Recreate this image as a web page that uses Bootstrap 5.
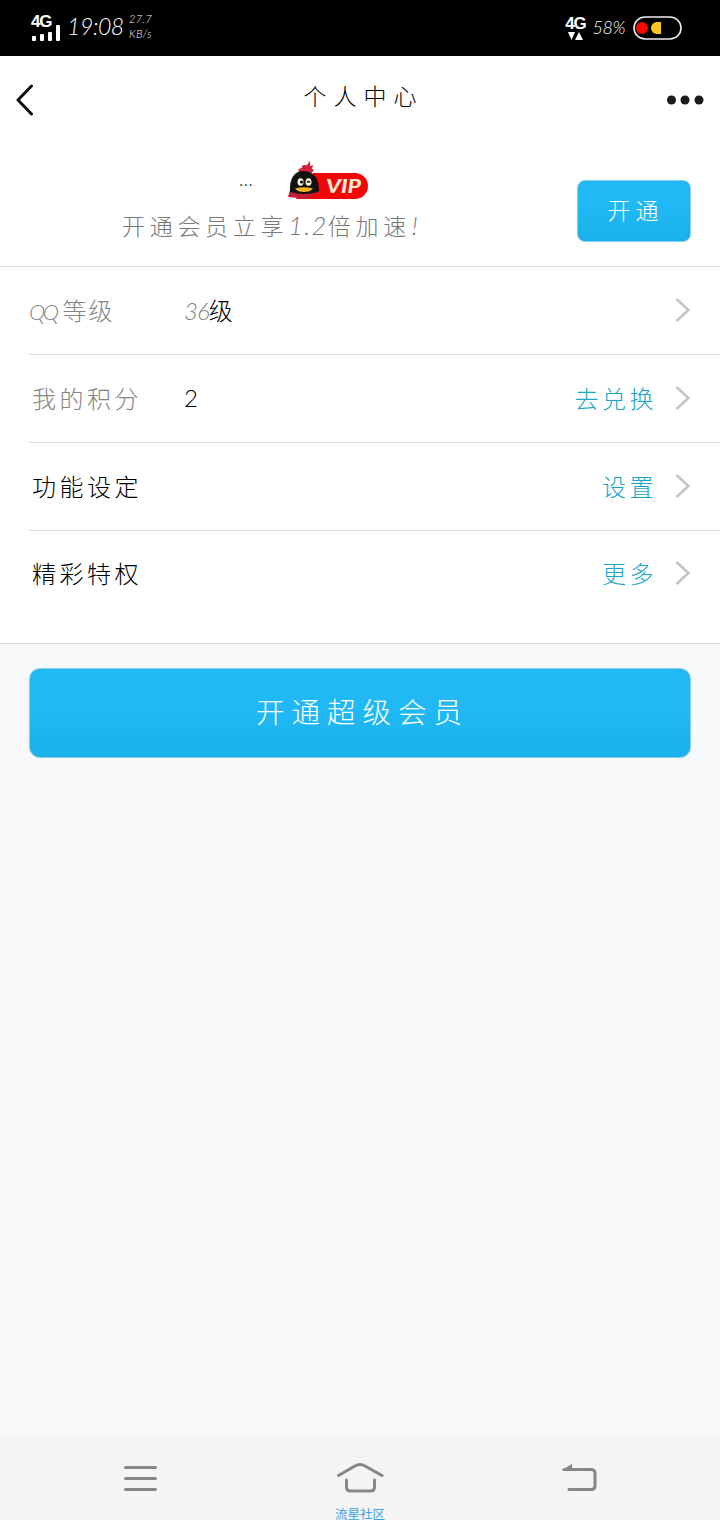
<!DOCTYPE html>
<html lang="zh-CN">
<head>
<meta charset="utf-8">
<meta name="viewport" content="width=device-width, initial-scale=1">
<title>个人中心</title>
<link href="https://cdn.jsdelivr.net/npm/bootstrap@5.3.0/dist/css/bootstrap.min.css" rel="stylesheet">
<style>
body{font-family:"Noto Sans CJK SC",sans-serif;font-weight:300;line-height:1;background:#f7f9fb;color:#000;height:1520px;overflow:hidden}
svg{display:block;flex:none}
.lat{font-family:Lato,"Liberation Sans",sans-serif;font-weight:300;font-style:italic}
.status{height:56px;background:#000;color:#fff;padding:0 38px 0 31px}
.net{font-family:"Liberation Sans",sans-serif;font-weight:700;font-size:17px;letter-spacing:-1.2px;line-height:15px}
.clock{font-size:23px;letter-spacing:-.4px;margin:0 0 3px 7px;width:55px}
.speed{font-size:11px;line-height:15px;letter-spacing:.4px;margin:0 0 4px 7px}
.battery-text{font-size:18px;letter-spacing:-.5px;margin:0 8px 3px 7px}
.topbar{height:88px;padding:0 16px}
.page-title{font-size:23px;letter-spacing:7px;padding-left:27px}
.profile{height:123px;border-bottom:1px solid #dadddf;padding:0 29px 0 122px}
.promo{color:#777;font-size:23px;letter-spacing:4.7px;margin-top:13px;white-space:nowrap}
.promo .lat{letter-spacing:1.6px;font-size:25px;line-height:20px}
.promo .bang{margin-left:1px}
.nick{font-size:17px;width:166px;padding-left:117px;height:22px;line-height:18px;letter-spacing:.5px}
.blue{background:linear-gradient(#21b9f5 45%,#19b1ea);border:1px solid #8ccce6;color:#fff;font-weight:300;line-height:1}
.blue:hover{color:#fff}
.open-btn{width:114px;height:62px;border-radius:8px;font-size:23px;letter-spacing:5px;padding:0 0 4px 3px;margin-top:12px}
.big-btn{width:662px;height:90px;border-radius:11px;font-size:28.5px;letter-spacing:7px;margin:24px 29px 0;padding:0 0 4px 5px}
.menu-row{height:88px;border-bottom:1px solid #d9dcdd;margin-left:29px;padding:0 30px 1px 3px;font-size:24px;letter-spacing:3.5px}
.menu-row .label{width:152px}
.muted{color:#858585}
.accent{color:#19a5c9;margin-right:18px}
.last-row{height:113px;margin-left:0;padding-left:32px;padding-bottom:29px}
.level{letter-spacing:0}
.level .lat{letter-spacing:-1px}
.qq{letter-spacing:-2.500px;margin-left:-3px;font-size:22px}
.dock{height:84px;background:#f4f4f4}
.dock-cap{color:#3ba2ed;font-size:12.5px;font-weight:400;line-height:13px;margin-top:14px}
</style>
<script src="https://cdn.jsdelivr.net/npm/bootstrap@5.3.0/dist/js/bootstrap.bundle.min.js"></script>
</head>
<body class="d-flex flex-column">
<header class="status d-flex align-items-center">
  <div class="d-flex flex-column">
    <span class="net">4G</span>
    <svg width="29" height="17" viewBox="0 0 29 17" style="margin-top:-4px"><g fill="#fff"><rect x="1" y="11" width="4" height="5" rx="1"/><rect x="9" y="9" width="4" height="7" rx="1"/><rect x="17" y="7" width="4" height="9" rx="1"/><rect x="25" y="0" width="4" height="16" rx="1"/></g></svg>
  </div>
  <span class="lat clock">19:08</span>
  <div class="lat speed d-flex flex-column"><span>27.7</span><span>KB/s</span></div>
  <div class="ms-auto d-flex align-items-center">
    <div class="d-flex flex-column align-items-center">
      <span class="net">4G</span>
      <svg width="15" height="8" viewBox="0 0 15 8" style="margin-top:1px"><path d="M0 0h7L3.5 8zM11 0l4 8H7z" fill="#fff"/></svg>
    </div>
    <span class="lat battery-text">58%</span>
    <svg width="49" height="24" viewBox="0 0 49 24"><rect x="1" y="1" width="47" height="22" rx="11" fill="none" stroke="#eee" stroke-width="1.6"/><circle cx="9" cy="12" r="6" fill="#f40c00"/><path d="M28 6h-4a6 6 0 0 0 0 12h4z" fill="#fac51c"/></svg>
  </div>
</header>
<main class="bg-white">
  <nav class="topbar d-flex align-items-center justify-content-between">
    <svg width="18" height="32" viewBox="0 0 18 32"><path d="M15.500 2 2 16l13.500 14" fill="none" stroke="#111" stroke-width="3" stroke-linecap="round" stroke-linejoin="round"/></svg>
    <h1 class="page-title fw-light mb-2">个人中心</h1>
    <svg width="38" height="10" viewBox="0 0 38 10"><g fill="#1b1b1b"><circle cx="5.500" cy="5" r="4.500"/><circle cx="19" cy="5" r="4.500"/><circle cx="33" cy="5" r="4.500"/></g></svg>
  </nav>
  <section class="profile d-flex justify-content-between align-items-center">
    <div style="margin-bottom:12px">
      <div class="d-flex align-items-center">
        <span class="nick">...</span>
        <svg width="81" height="40" viewBox="0 0 81 40">
          <path d="M25 12h42a13 13 0 0 1 0 26H8z" fill="#f40505"/>
          <path d="M2 29q16-2 27 2L20 38 0 36z" fill="#c71b3a"/>
          <path d="M12 14q-4-7 2-7-1-3 3-3 3 1 4-4 2 2 1 5l3-1-1 4 2 1-4 5z" fill="#d4213c"/>
          <path d="M2 31Q1 10 16 10q15 1 15 20l-1 1q-14 4-28 0z" fill="#111"/>
          <ellipse cx="12.500" cy="21" rx="3" ry="3.800" fill="#fff8df"/><ellipse cx="20.500" cy="21" rx="3" ry="3.800" fill="#fff8df"/>
          <circle cx="13.500" cy="21" r="1.500"/><path d="M19 21.500q1.500-2 3 0" fill="none" stroke="#111" stroke-width="1.300"/>
          <path d="M7 27.500q9-2.500 18 0-3 3.500-9 3.500t-9-3.500" fill="#f9ae25"/>
          <text x="38" y="31.500" textLength="35" lengthAdjust="spacingAndGlyphs" fill="#ffecd2" font-family="Lato,sans-serif" font-size="19" font-weight="900" font-style="italic">VIP</text>
        </svg>
      </div>
      <div class="promo">开通会员立享<span class="lat">1.2</span>倍加速<span class="lat bang">!</span></div>
    </div>
    <button class="btn blue open-btn">开通</button>
  </section>
  <section>
    <div class="menu-row d-flex align-items-center"><span class="label muted"><span class="lat qq">QQ</span><span style="margin-left:6px;letter-spacing:2px">等级</span></span><span class="level"><span class="lat muted">36</span>级</span>
      <svg class="ms-auto" width="15" height="26" viewBox="0 0 15 26"><path d="m1.500 2 12 11-12 11" fill="none" stroke="#c2c2c4" stroke-width="2.500"/></svg></div>
    <div class="menu-row d-flex align-items-center"><span class="label muted">我的积分</span><span class="lat" style="font-style:normal">2</span><span class="accent ms-auto">去兑换</span>
      <svg width="15" height="26" viewBox="0 0 15 26"><path d="m1.500 2 12 11-12 11" fill="none" stroke="#c2c2c4" stroke-width="2.500"/></svg></div>
    <div class="menu-row d-flex align-items-center"><span>功能设定</span><span class="accent ms-auto">设置</span>
      <svg width="15" height="26" viewBox="0 0 15 26"><path d="m1.500 2 12 11-12 11" fill="none" stroke="#c2c2c4" stroke-width="2.500"/></svg></div>
    <div class="menu-row last-row d-flex align-items-center"><span>精彩特权</span><span class="accent ms-auto">更多</span>
      <svg width="15" height="26" viewBox="0 0 15 26"><path d="m1.500 2 12 11-12 11" fill="none" stroke="#c2c2c4" stroke-width="2.500"/></svg></div>
  </section>
</main>
<button class="btn blue big-btn">开通超级会员</button>
<footer class="dock mt-auto row g-0 justify-content-center">
  <div class="col-4 d-flex justify-content-center"><svg width="34" height="26" viewBox="0 0 34 26" style="margin:30px 0 0 41px"><path d="M1.500 1.500h30M1.500 12.500h30M1.500 23.500h30" stroke="#868686" stroke-width="3" stroke-linecap="round"/></svg></div>
  <div class="col-4 d-flex flex-column align-items-center"><svg width="48" height="31" viewBox="0 0 48 31" style="margin-top:26px"><path d="M2.500 13.500 19 4q5-3 10 0l17 9.500M10.500 18v7q0 4 4 4h20q4 0 4-4v-7" fill="none" stroke="#868686" stroke-width="3" stroke-linecap="round"/></svg><span class="dock-cap">流星社区</span></div>
  <div class="col-4 d-flex justify-content-center"><svg width="35" height="28" viewBox="0 0 35 28" style="margin:28px 41px 0 0"><path d="M2 5.500h27q4 0 4 4v12q0 4-4 4H7" fill="none" stroke="#868686" stroke-width="3" stroke-linecap="round"/><path d="M0 6 10 0v7z" fill="#868686"/></svg></div>
</footer>
</body>
</html>
